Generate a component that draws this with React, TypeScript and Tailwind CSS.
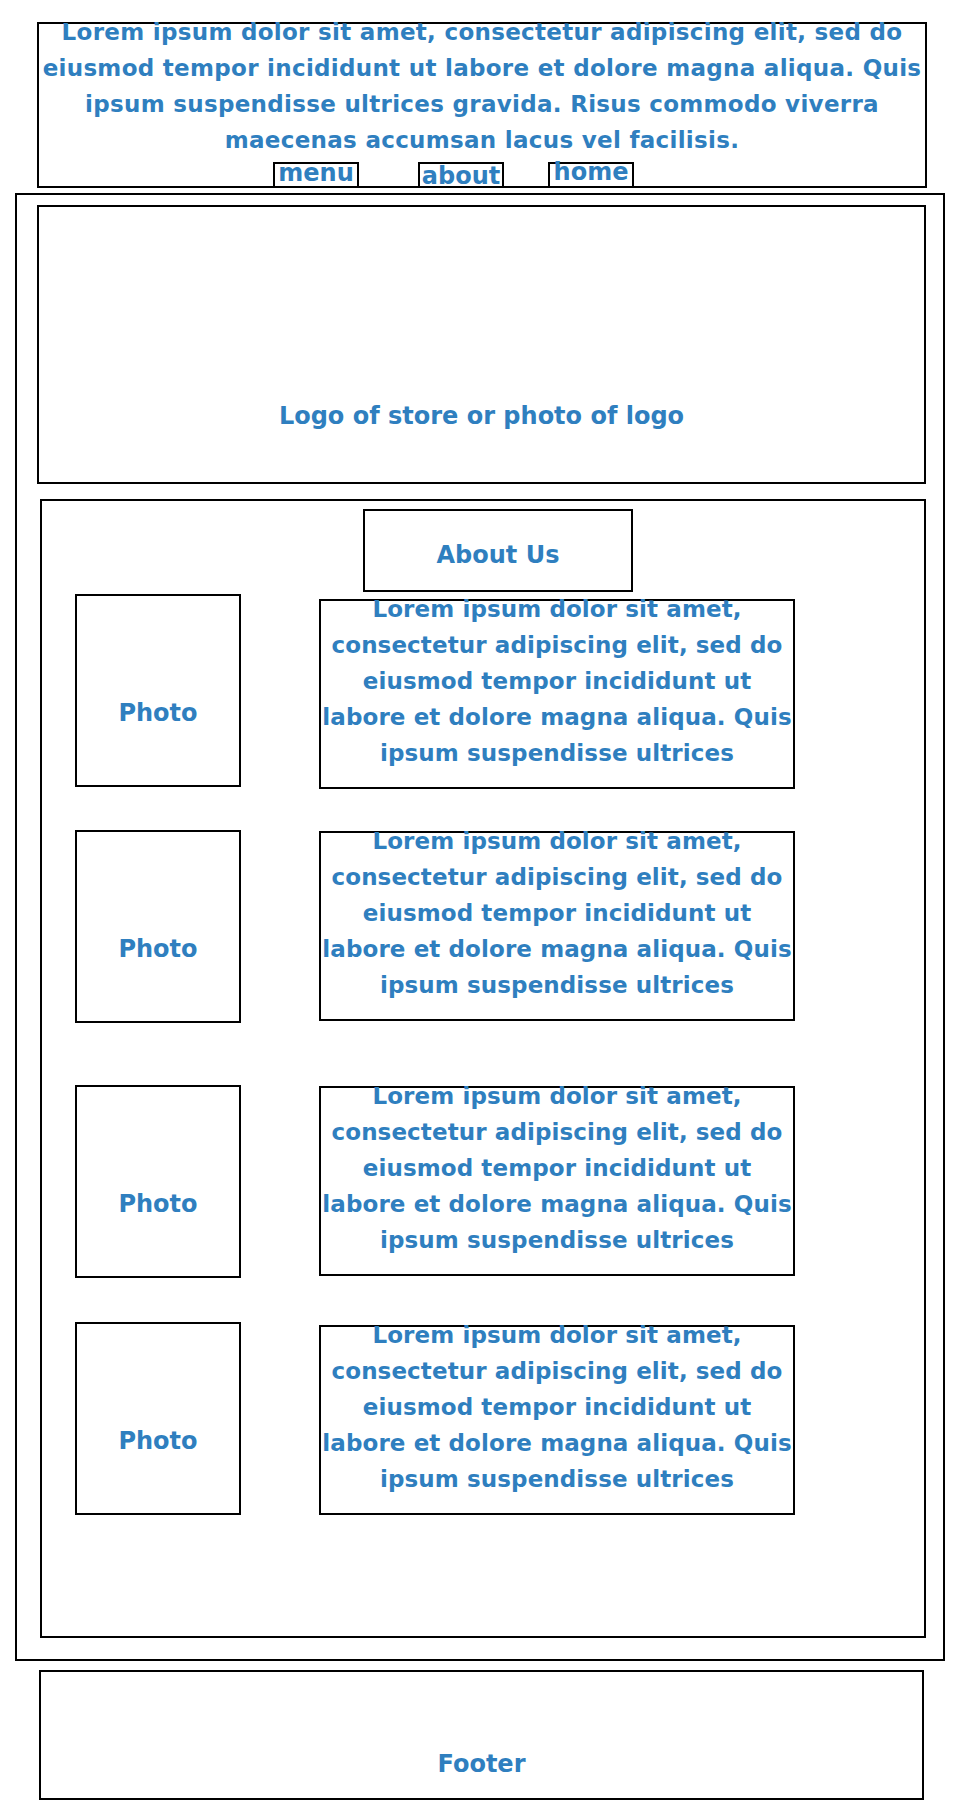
import React from 'react';

const LOREM =
  'Lorem ipsum dolor sit amet, consectetur adipiscing elit, sed do eiusmod tempor incididunt ut labore et dolore magna aliqua. Quis ipsum suspendisse ultrices';

const ROWS = [
  { gap: 'mt-[2px]', textTop: 'mt-[5px]' },
  { gap: 'mt-[43px]', textTop: 'mt-[1px]' },
  { gap: 'mt-[62px]', textTop: 'mt-[1px]' },
  { gap: 'mt-[44px]', textTop: 'mt-[3px]' },
];

function AboutRow({ gap, textTop }: { gap: string; textTop: string }) {
  return (
    <div className={`${gap} flex items-start h-[193px]`}>
      <div className="w-[166px] h-[193px] shrink-0 border-2 border-black flex items-center justify-center pt-[44px] text-[24px] leading-[36px]">
        Photo
      </div>
      <div className={`${textTop} ml-[78px] w-[476px] h-[190px] shrink-0 border-2 border-black`}>
        <p className="-mt-[10px] text-center text-[23px] leading-[36px] tracking-[0.1px]">{LOREM}</p>
      </div>
    </div>
  );
}

export default function App() {
  return (
    <div className="min-h-screen bg-white pt-[22px] font-['DejaVu_Sans',sans-serif] font-bold text-[#2f7fbf]">
      {/* top bar with intro text and nav */}
      <header className="ml-[37px] w-[890px] h-[166px] border-2 border-black flex flex-col">
        <p className="-mt-[10px] text-center text-[23px] leading-[36px] tracking-[0.3px]">
          Lorem ipsum dolor sit amet, consectetur adipiscing elit, sed do eiusmod tempor incididunt ut labore et
          dolore magna aliqua. Quis ipsum suspendisse ultrices gravida. Risus commodo viverra maecenas accumsan lacus
          vel facilisis.
        </p>
        <nav className="mt-auto flex pl-[234px] text-[24px] leading-[22px]">
          <a className="w-[86px] h-[24px] border-2 border-b-0 border-black text-center">
            <span className="block -mt-[2px]">menu</span>
          </a>
          <a className="ml-[59px] w-[86px] h-[24px] border-2 border-b-0 border-black text-center">
            <span className="block mt-[1px]">about</span>
          </a>
          <a className="ml-[44px] w-[86px] h-[24px] border-2 border-b-0 border-black text-center">
            <span className="block -mt-[3px]">home</span>
          </a>
        </nav>
      </header>

      <main className="mt-[5px] ml-[15px] w-[930px] h-[1468px] border-2 border-black pt-[10px] pl-[20px] pr-[17px]">
        <div className="h-[279px] border-2 border-black flex items-end justify-center pb-[48px] text-[24px] leading-[36px]">
          Logo of store or photo of logo
        </div>

        <section className="mt-[15px] ml-[3px] h-[1139px] border-2 border-black pt-[8px]">
          <div className="ml-[321px] w-[270px] h-[83px] border-2 border-black flex items-center justify-center pt-[8px] text-[24px] leading-[36px]">
            About Us
          </div>
          <div className="pl-[33px]">
            {ROWS.map((r, i) => (
              <AboutRow key={i} gap={r.gap} textTop={r.textTop} />
            ))}
          </div>
        </section>
      </main>

      <footer className="mt-[9px] ml-[39px] w-[885px] h-[130px] border-2 border-black flex items-end justify-center pb-[16px] text-[24px] leading-[36px]">
        Footer
      </footer>
    </div>
  );
}
